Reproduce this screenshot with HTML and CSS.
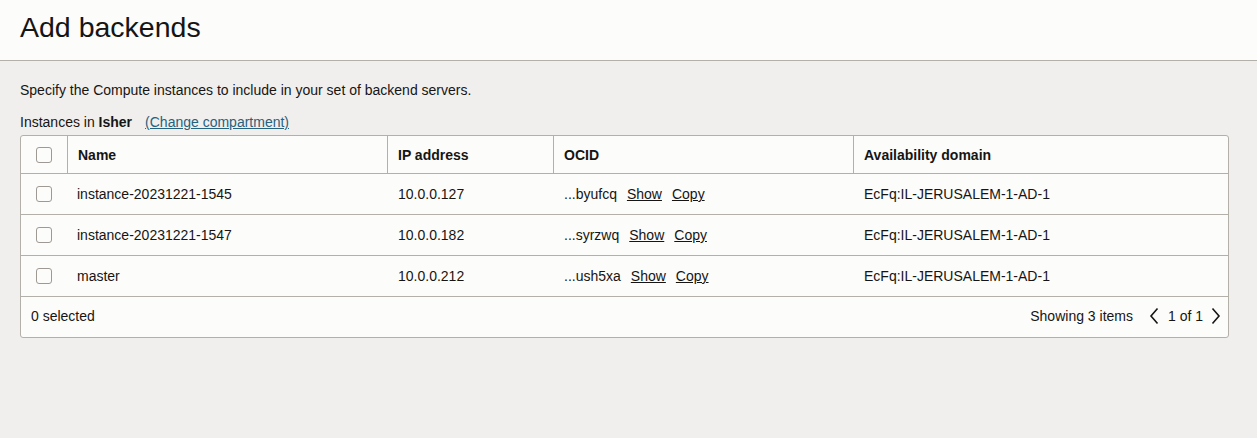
FILE: index.html
```html
<!DOCTYPE html>
<html>
<head>
<meta charset="utf-8">
<link rel="stylesheet" href="styles.css">
</head>
<body>
<header class="page-header">
  <h1 class="title">Add backends</h1>
</header>
<main class="content">
  <p class="desc">Specify the Compute instances to include in your set of backend servers.</p>
  <div class="scope">Instances in <b>Isher</b><a class="link" href="#">(Change compartment)</a></div>
  <div class="table">
    <div class="row head">
      <div class="cell c-check"><span class="checkbox"></span></div>
      <div class="cell c-name">Name</div>
      <div class="cell c-ip">IP address</div>
      <div class="cell c-ocid">OCID</div>
      <div class="cell c-ad">Availability domain</div>
    </div>
    <div class="row">
      <div class="cell c-check"><span class="checkbox"></span></div>
      <div class="cell c-name">instance-20231221-1545</div>
      <div class="cell c-ip">10.0.0.127</div>
      <div class="cell c-ocid">...byufcq<a class="act" href="#">Show</a><a class="act" href="#">Copy</a></div>
      <div class="cell c-ad">EcFq:IL-JERUSALEM-1-AD-1</div>
    </div>
    <div class="row">
      <div class="cell c-check"><span class="checkbox"></span></div>
      <div class="cell c-name">instance-20231221-1547</div>
      <div class="cell c-ip">10.0.0.182</div>
      <div class="cell c-ocid">...syrzwq<a class="act" href="#">Show</a><a class="act" href="#">Copy</a></div>
      <div class="cell c-ad">EcFq:IL-JERUSALEM-1-AD-1</div>
    </div>
    <div class="row">
      <div class="cell c-check"><span class="checkbox"></span></div>
      <div class="cell c-name">master</div>
      <div class="cell c-ip">10.0.0.212</div>
      <div class="cell c-ocid">...ush5xa<a class="act" href="#">Show</a><a class="act" href="#">Copy</a></div>
      <div class="cell c-ad">EcFq:IL-JERUSALEM-1-AD-1</div>
    </div>
    <div class="footer">
      <span class="selected">0 selected</span>
      <div class="pager">
        <span class="count">Showing 3 items</span>
        <svg class="chev" width="12" height="20" viewBox="0 0 12 20"><path d="M9.5 2.5 L3 10 L9.5 17.5" fill="none" stroke="#161513" stroke-width="1.6"/></svg>
        <span class="pages">1 of 1</span>
        <svg class="chev" width="12" height="20" viewBox="0 0 12 20"><path d="M2.5 2.5 L9 10 L2.5 17.5" fill="none" stroke="#161513" stroke-width="1.6"/></svg>
      </div>
    </div>
  </div>
</main>
</body>
</html>
```
FILE: styles.css
```css
* { box-sizing: border-box; }
html, body {
  margin: 0;
  padding: 0;
  background: #f1efed;
  font-family: "Liberation Sans", Arial, sans-serif;
  color: #161513;
}
.page-header {
  background: #fcfcfb;
  height: 61px;
  border-bottom: 1px solid #b3afa9;
  padding: 0 20px;
  display: flex;
  align-items: center;
}
.title {
  margin: 0;
  font-size: 28.5px;
  font-weight: 400;
  position: relative;
  top: -3px;
}
.content {
  padding: 20px 28px 0 20px;
}
.desc {
  margin: 0;
  font-size: 14px;
  line-height: 18px;
}
.scope {
  margin-top: 14px;
  font-size: 14px;
  line-height: 18px;
}
.scope b { font-weight: 700; }
.link {
  color: #24627f;
  margin-left: 13px;
  text-decoration: underline;
}
.table {
  margin-top: 4px;
  background: #fcfcfb;
  border: 1px solid #b3afa9;
  border-radius: 3px;
}
.row {
  display: grid;
  grid-template-columns: 46px 320px 166px 300px 1fr;
  height: 41px;
  border-bottom: 1px solid #b3afa9;
  font-size: 14px;
}
.row.head {
  height: 38px;
  font-weight: 700;
}
.cell {
  display: flex;
  align-items: center;
  padding-left: 10px;
}
.row.head .cell + .cell { border-left: 1px solid #b3afa9; }
.row:not(.head) .cell.c-ip,
.row:not(.head) .cell.c-ocid,
.row:not(.head) .cell.c-ad { padding-left: 11px; }
.c-check { padding-left: 15px; }
.checkbox {
  display: inline-block;
  width: 16px;
  height: 16px;
  border: 1px solid #9e9993;
  border-radius: 3px;
  background: #fcfcfb;
}
.act {
  color: #161513;
  text-decoration: underline;
  margin-left: 10px;
}
.footer {
  height: 40px;
  display: flex;
  align-items: center;
  justify-content: space-between;
  padding: 0 6px 2px 10px;
  font-size: 14px;
}
.pager {
  display: flex;
  align-items: center;
}
.count { margin-right: 15px; }
.pages { margin: 0 7px 0 8px; }
.chev { display: block; }
```
